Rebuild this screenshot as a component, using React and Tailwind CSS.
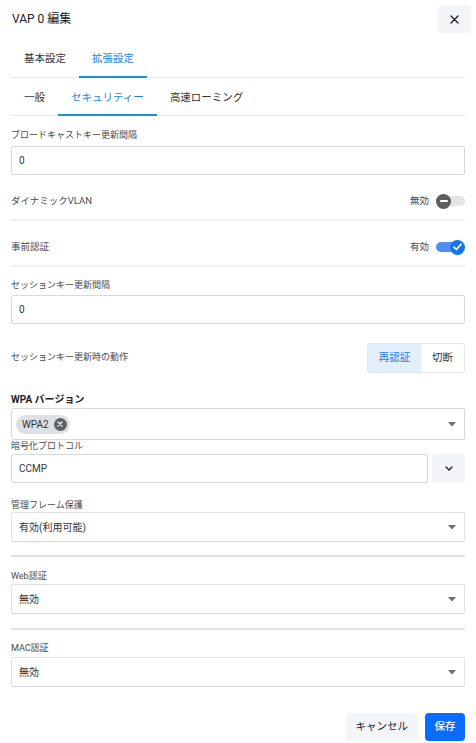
import React from "react";

function Caret() {
  return (
    <svg width="8" height="5" viewBox="0 0 8 5" className="shrink-0">
      <path d="M0 0 L8 0 L4 4.5 Z" fill="#6b7078" />
    </svg>
  );
}

function Label({ children, className = "" }) {
  return (
    <div className={"text-[9px] leading-[12px] text-[#4a4a4a] " + className}>
      {children}
    </div>
  );
}

function TextInput({ value, className = "" }) {
  return (
    <div
      className={
        "h-[29px] border border-[#d6dade] rounded-[2px] flex items-center pl-[7px] text-[10px] text-[#333] " +
        className
      }
    >
      {value}
    </div>
  );
}

function Select({ value, className = "" }) {
  return (
    <div
      className={
        "h-[30px] border border-[#dfe2e6] border-b-[#d3d7dc] rounded-[2px] flex items-center justify-between pl-[7px] pr-[8px] text-[10px] text-[#333] " +
        className
      }
    >
      <span>{value}</span>
      <Caret />
    </div>
  );
}

function ToggleOff() {
  return (
    <div className="relative w-[29px] h-[15px] flex items-center">
      <div className="absolute left-0 right-0 h-[10px] rounded-full bg-[#e3e4e6]" />
      <div className="absolute left-0 w-[15px] h-[15px] rounded-full bg-[#5c5e62] flex items-center justify-center">
        <div className="w-[8px] h-[1.6px] bg-white rounded" />
      </div>
    </div>
  );
}

function ToggleOn() {
  return (
    <div className="relative w-[29px] h-[15px] flex items-center">
      <div className="absolute left-0 w-[25px] h-[10px] rounded-full bg-[#4d8ff3]" />
      <div className="absolute right-0 w-[15px] h-[15px] rounded-full bg-[#1574ea] flex items-center justify-center">
        <svg width="9" height="8" viewBox="0 0 9 8">
          <path d="M1 4.2 L3.4 6.5 L8 1.2" fill="none" stroke="white" strokeWidth="1.7" strokeLinecap="round" strokeLinejoin="round" />
        </svg>
      </div>
    </div>
  );
}

export default function App() {
  return (
    <div className="w-[476px] h-[743px] bg-white overflow-hidden font-[Roboto,'Noto_Sans_CJK_JP',sans-serif] text-[#333]">
      {/* Header */}
      <div className="flex items-start justify-between pl-[12px] pr-[5px] pt-[5px]">
        <div className="h-[27px] flex items-center text-[12px] text-[#222]">VAP 0 編集</div>
        <button className="w-[33px] h-[28px] rounded-[4px] bg-[#f3f5f9] flex items-center justify-center">
          <svg width="9" height="9" viewBox="0 0 9 9">
            <path d="M1 1 L8 8 M8 1 L1 8" stroke="#222" strokeWidth="1.4" strokeLinecap="round" />
          </svg>
        </button>
      </div>

      {/* Tabs row 1 */}
      <div className="mx-[11px] mt-[7px] flex border-b border-[#e6e8eb]">
        <div className="h-[37px] px-[13px] flex items-center text-[10.5px] text-[#333]">基本設定</div>
        <div className="relative h-[37px] px-[13px] flex items-center text-[10.5px] text-[#1a84e5]">
          拡張設定
          <div className="absolute left-0 right-0 bottom-[-1px] h-[2px] bg-[#1a8fe0]" />
        </div>
      </div>

      {/* Tabs row 2 */}
      <div className="mx-[11px] flex border-b border-[#e6e8eb]">
        <div className="h-[37px] pt-[2px] px-[13px] flex items-center text-[10.5px] text-[#333]">一般</div>
        <div className="relative h-[37px] pt-[2px] px-[13px] flex items-center text-[10.5px] text-[#1a84e5]">
          セキュリティー
          <div className="absolute left-0 right-0 bottom-[-1px] h-[2px] bg-[#1a8fe0]" />
        </div>
        <div className="h-[37px] pt-[2px] px-[13px] flex items-center text-[10.5px] text-[#333]">高速ローミング</div>
      </div>

      {/* Content */}
      <div className="px-[11px]">
        <Label className="mt-[13px]">ブロードキャストキー更新間隔</Label>
        <TextInput value="0" className="mt-[5px]" />

        <div className="mt-[8px] h-[38px] flex items-center justify-between border-b-2 border-[#eef0f2]">
          <span className="text-[9.5px] text-[#4a4a4a]">ダイナミックVLAN</span>
          <div className="flex items-center gap-[7px]">
            <span className="text-[9.5px] text-[#4a4a4a]">無効</span>
            <ToggleOff />
          </div>
        </div>

        <div className="mt-[8px] h-[38px] flex items-center justify-between border-b-2 border-[#eef0f2]">
          <span className="text-[9.5px] text-[#4a4a4a]">事前認証</span>
          <div className="flex items-center gap-[7px]">
            <span className="text-[9.5px] text-[#4a4a4a]">有効</span>
            <ToggleOn />
          </div>
        </div>

        <Label className="mt-[12px]">セッションキー更新間隔</Label>
        <TextInput value="0" className="mt-[4px]" />

        <div className="mt-[19px] h-[30px] flex items-center justify-between">
          <span className="text-[9px] text-[#4a4a4a]">セッションキー更新時の動作</span>
          <div className="flex h-[30px] border border-[#e5e7ea] rounded-[3px] overflow-hidden">
            <div className="w-[53px] flex items-center justify-center bg-[#e3effc] text-[10.5px] text-[#1a7fe5]">再認証</div>
            <div className="w-[43px] flex items-center justify-center bg-white text-[10.5px] text-[#333]">切断</div>
          </div>
        </div>

        <div className="mt-[21px] text-[10px] leading-[12px] font-bold text-[#222]">WPA バージョン</div>
        <div className="mt-[2px] h-[32px] border border-[#d6dade] rounded-[2px] flex items-center justify-between pl-[4px] pr-[8px]">
          <div className="inline-flex items-center h-[19px] pl-[6px] pr-[3px] gap-[5px] rounded-full bg-[#dde1e6] text-[10px] text-[#333]">
            WPA2
            <div className="w-[13px] h-[13px] rounded-full bg-[#5d6166] flex items-center justify-center">
              <svg width="6" height="6" viewBox="0 0 6 6">
                <path d="M1 1 L5 5 M5 1 L1 5" stroke="white" strokeWidth="1.3" strokeLinecap="round" />
              </svg>
            </div>
          </div>
          <Caret />
        </div>

        <Label>暗号化プロトコル</Label>
        <div className="mt-[2px] flex gap-[4px]">
          <TextInput value="CCMP" className="flex-1" />
          <div className="w-[33px] h-[29px] rounded-[3px] bg-[#f3f5f9] flex items-center justify-center">
            <svg width="8" height="5" viewBox="0 0 8 5">
              <path d="M1 1 L4 4 L7 1" fill="none" stroke="#222" strokeWidth="1.4" strokeLinecap="round" strokeLinejoin="round" />
            </svg>
          </div>
        </div>

        <Label className="mt-[16px]">管理フレーム保護</Label>
        <Select value="有効(利用可能)" className="mt-[1px]" />

        <div className="mt-[13px] h-[2px] bg-[#dfe2e6]" />

        <Label className="mt-[13px]">Web認証</Label>
        <Select value="無効" className="mt-[2px]" />

        <div className="mt-[14px] h-[2px] bg-[#dfe2e6]" />

        <Label className="mt-[12px]">MAC認証</Label>
        <Select value="無効" className="mt-[3px]" />

        <div className="mt-[26px] flex justify-end gap-[7px]">
          <button className="h-[28px] px-[10px] rounded-[4px] bg-[#f3f5f9] text-[10.5px] text-[#222]">キャンセル</button>
          <button className="h-[28px] w-[40px] rounded-[4px] bg-[#0a6cff] text-[10.5px] font-medium text-white">保存</button>
        </div>
      </div>
    </div>
  );
}
